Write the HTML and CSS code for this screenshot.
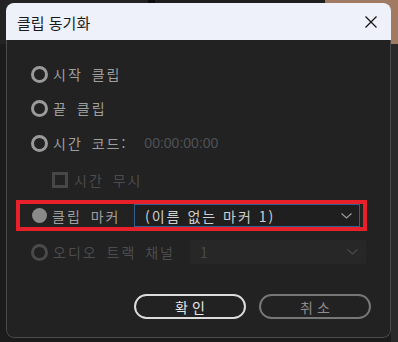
FILE: index.html
```html
<!DOCTYPE html>
<html lang="ko">
<head>
    <meta charset="UTF-8">
    <title>클립 동기화</title>
    <link rel="stylesheet" href="styles.css">
</head>
<body>
    <div class="dialog">
        <!-- Title bar -->
        <div class="titlebar">
            <span class="title">클립 동기화</span>
            <svg class="close" width="12" height="12" viewBox="0 0 12 12">
                <path d="M0.5 0.5 L11.5 11.5 M11.5 0.5 L0.5 11.5" stroke="#111" stroke-width="1.2" fill="none"/>
            </svg>
        </div>

        <!-- Options -->
        <div class="content">
            <div class="row row-start">
                <span class="radio"></span>
                <span class="label">시작 클립</span>
            </div>
            <div class="row row-end">
                <span class="radio"></span>
                <span class="label">끝 클립</span>
            </div>
            <div class="row row-tc">
                <span class="radio"></span>
                <span class="label">시간 코드:</span>
                <span class="timecode">00:00:00:00</span>
            </div>
            <div class="row row-check">
                <span class="checkbox"></span>
                <span class="label dim">시간 무시</span>
            </div>
            <div class="row row-marker">
                <span class="radio checked"></span>
                <span class="label marker-label">클립 마커</span>
                <div class="select active">
                    <span>(이름 없는 마커 1)</span>
                    <svg class="chev" width="11" height="6" viewBox="0 0 11 6"><path d="M0.5 0.5 L5.5 5 L10.5 0.5" stroke="#9a9a9a" stroke-width="1.2" fill="none"/></svg>
                </div>
            </div>
            <div class="row row-audio">
                <span class="radio off"></span>
                <span class="label dim audio-label">오디오 트랙 채널</span>
                <div class="select disabled">
                    <span>1</span>
                    <svg class="chev" width="11" height="6" viewBox="0 0 11 6"><path d="M0.5 0.5 L5.5 5 L10.5 0.5" stroke="#4a4a4a" stroke-width="1.2" fill="none"/></svg>
                </div>
            </div>

            <div class="buttons">
                <button class="btn primary">확인</button>
                <button class="btn secondary">취소</button>
            </div>
        </div>
    </div>
</body>
</html>
```

FILE: styles.css
```css
/* General */
body {
    margin: 0;
    width: 398px;
    height: 342px;
    overflow: hidden;
    font-family: "Noto Sans CJK KR", "Noto Sans", sans-serif;
    background:
        linear-gradient(90deg, #232323 0 148px, #0e0e0e 148px 155px, #1f1f1f 155px 325px, #a17a62 325px) top / 100% 44px no-repeat,
        linear-gradient(90deg, #1c1c1c 0 391px, #2a2a2a 391px);
}

/* Dialog window */
.dialog {
    width: 385px;
    height: 335px;
    margin: 3px 0 0 6px;
    border-radius: 8px;
    overflow: hidden;
    display: flex;
    flex-direction: column;
}

.titlebar {
    height: 37px;
    flex: none;
    background-color: #eef1f9;
    display: flex;
    align-items: center;
    justify-content: space-between;
    padding: 0 14px 0 11px;
}

.title {
    font-size: 15px;
    color: #1a1a1a;
    margin-top: 1px;
}

.close {
    display: block;
}

.content {
    flex: 1;
    background-color: #222222;
    border: 1px solid #4b4b4b;
    border-top: none;
    border-radius: 0 0 8px 8px;
    padding: 22px 19px 18px 24px;
    display: flex;
    flex-direction: column;
}

/* Rows */
.row {
    display: flex;
    align-items: center;
    height: 24px;
}

.row-end { margin-top: 10px; }
.row-tc { margin-top: 11px; }
.row-check { margin-top: 13px; padding-left: 21px; }
.row-marker {
    margin: 12px 8px 0 -11px;
    padding: 0 3px 0 11px;
    height: 23px;
    outline: 4px solid #e8202a;
}
.row-audio { margin: 13px 5px 0 0; }

.label {
    font-size: 14px;
    letter-spacing: 2px;
    word-spacing: 3px;
    color: #9e9e9e;
    margin-left: 5px;
    white-space: nowrap;
}

.label.dim {
    color: #4c4c4c;
}

.marker-label {
    width: 82px;
    flex: none;
}

.audio-label {
    margin-right: 15px;
}

.radio {
    width: 11px;
    height: 11px;
    border: 3px solid #9a9a9a;
    border-radius: 50%;
    flex: none;
}

.radio.checked {
    width: 15px;
    height: 15px;
    border: none;
    background-color: #8a8a8a;
    margin-left: 1px;
}

.radio.off {
    border-color: #4a4a4a;
}

.checkbox {
    width: 10px;
    height: 10px;
    border: 3px solid #474747;
    flex: none;
}

.row-check .label {
    margin-left: 6px;
}

.timecode {
    font-family: "Liberation Sans", Arial, sans-serif;
    font-size: 14px;
    color: #4d5156;
    margin-left: 17px;
}

/* Dropdowns */
.select {
    flex: 1;
    height: 100%;
    box-sizing: border-box;
    display: flex;
    align-items: center;
    justify-content: space-between;
    padding: 0 7px 0 10px;
    font-size: 14px;
    letter-spacing: 2px;
}

.select.active {
    border: 1px solid #2f5f93;
    background-color: #1f1f1f;
    color: #cfcfcf;
}

.select.disabled {
    background-color: #272727;
    border-radius: 2px;
    color: #4a4a4a;
    padding-right: 8px;
}

/* Buttons */
.buttons {
    margin-top: auto;
    display: flex;
    justify-content: flex-end;
    gap: 13px;
}

.btn {
    width: 112px;
    height: 25px;
    border-radius: 13px;
    background-color: #222222;
    font-family: "Noto Sans CJK KR", sans-serif;
    font-size: 14px;
    letter-spacing: 4px;
    text-indent: 4px;
    padding: 0;
    cursor: pointer;
}

.btn.primary {
    border: 2px solid #dcdcdc;
    color: #e6e6e6;
}

.btn.secondary {
    border: 2px solid #777777;
    color: #8c8c8c;
}
```
